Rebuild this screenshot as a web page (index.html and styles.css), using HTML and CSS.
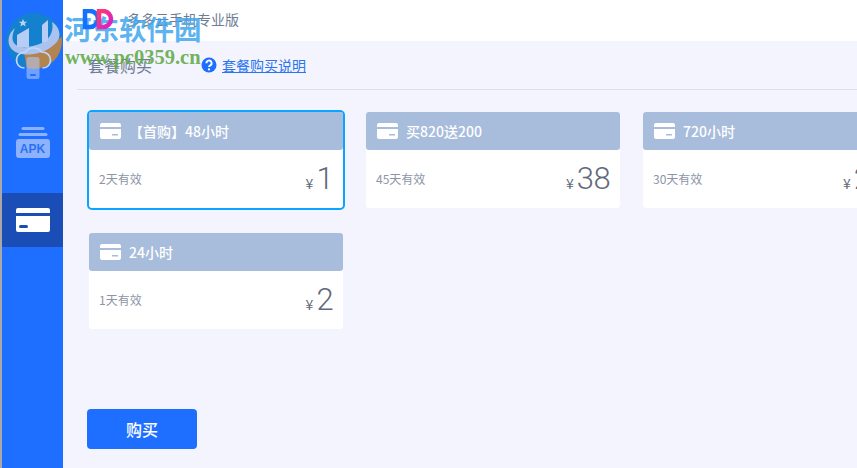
FILE: index.html
```html
<!DOCTYPE html>
<html lang="zh-CN">
<head>
<meta charset="utf-8">
<title>多多云手机专业版</title>
<link rel="stylesheet" href="styles.css">
</head>
<body>
<div class="app">
  <aside class="sidebar">
    <div class="nav-item">
      <svg class="nav-phone" width="40" height="44" viewBox="0 0 40 44">
        <path d="M11.500 29C6 29 3.500 25 3.500 21C3.500 16 7.500 13 12.500 13C14 10.500 17 9 20.500 9C24 9 27 10.500 28.500 13C33.500 13 37.500 16 37.500 21C37.500 25 35 29 29.500 29" fill="none" stroke="#c3d6ff" stroke-width="1.700"/>
        <rect x="13.500" y="18" width="13" height="22" rx="2.500" fill="#b5ccff" fill-opacity=".55"/>
        <rect x="17" y="35" width="6" height="2" rx="1" fill="#1e6eff"/>
      </svg>
    </div>
    <div class="nav-item">
      <svg class="nav-apk" width="36" height="42" viewBox="0 0 36 42">
        <rect x="6.500" y="0" width="23" height="3" rx="1.500" fill="#8db2ff"/>
        <rect x="3.500" y="6" width="29" height="3" rx="1.500" fill="#8db2ff"/>
        <rect x="1" y="12" width="34" height="19" rx="3" fill="#8db2ff"/>
      </svg>
      <span class="apk-label">APK</span>
    </div>
    <div class="nav-item nav-active">
      <svg width="34" height="24" viewBox="0 0 34 24">
        <path d="M2 0h30a2 2 0 0 1 2 2v3H0V2a2 2 0 0 1 2-2zM0 8h34v14a2 2 0 0 1-2 2H2a2 2 0 0 1-2-2z" fill="#fff"/>
        <rect x="3" y="17" width="9" height="3" rx="1.500" fill="#1a4db5"/>
      </svg>
    </div>
  </aside>
  <main class="main">
    <header class="titlebar">
      <svg class="brand" width="32" height="22" viewBox="0 0 32 22">
        <defs>
          <linearGradient id="dd2" x1="0" y1="0" x2="1" y2="1">
            <stop offset="0" stop-color="#ff3b6e"/>
            <stop offset="1" stop-color="#d61fd0"/>
          </linearGradient>
        </defs>
        <path d="M3 2h5a8 8 0 0 1 0 16H3z" fill="none" stroke="#1470ff" stroke-width="4.500"/>
        <path d="M17 2h4a8 8 0 0 1 0 16h-4z" fill="none" stroke="url(#dd2)" stroke-width="4.500"/>
      </svg>
      <span class="app-name">多多云手机专业版</span>
    </header>
    <section class="content">
      <div class="section-head">
        <h1 class="section-title">套餐购买</h1>
        <svg class="help-icon" width="16" height="16" viewBox="0 0 16 16">
          <circle cx="8" cy="8" r="7.500" fill="#1e6eff"/>
          <path d="M5.400 6.200a2.600 2.600 0 1 1 3.900 2.200c-.8.500-1.300.8-1.300 1.700" fill="none" stroke="#fff" stroke-width="1.900"/>
          <circle cx="8" cy="12.400" r="1.100" fill="#fff"/>
        </svg>
        <a class="help-link" href="#">套餐购买说明</a>
      </div>
      <div class="plans">
        <article class="plan plan-selected">
          <div class="plan-head">
            <svg class="card-icon" width="21" height="16" viewBox="0 0 21 16"><path d="M2 0h17a2 2 0 0 1 2 2v2H0V2a2 2 0 0 1 2-2zM0 6h21v8a2 2 0 0 1-2 2H2a2 2 0 0 1-2-2z" fill="#fff"/><rect x="12" y="11" width="6" height="1.500" fill="#a8bcdb"/></svg>
            <span class="plan-name">【首购】48小时</span>
          </div>
          <div class="plan-body"><span class="plan-days">2天有效</span><span class="plan-price"><i class="yen">¥</i><b class="amount">1</b></span></div>
        </article>
        <article class="plan">
          <div class="plan-head">
            <svg class="card-icon" width="21" height="16" viewBox="0 0 21 16"><path d="M2 0h17a2 2 0 0 1 2 2v2H0V2a2 2 0 0 1 2-2zM0 6h21v8a2 2 0 0 1-2 2H2a2 2 0 0 1-2-2z" fill="#fff"/><rect x="12" y="11" width="6" height="1.500" fill="#a8bcdb"/></svg>
            <span class="plan-name">买820送200</span>
          </div>
          <div class="plan-body"><span class="plan-days">45天有效</span><span class="plan-price"><i class="yen">¥</i><b class="amount">38</b></span></div>
        </article>
        <article class="plan">
          <div class="plan-head">
            <svg class="card-icon" width="21" height="16" viewBox="0 0 21 16"><path d="M2 0h17a2 2 0 0 1 2 2v2H0V2a2 2 0 0 1 2-2zM0 6h21v8a2 2 0 0 1-2 2H2a2 2 0 0 1-2-2z" fill="#fff"/><rect x="12" y="11" width="6" height="1.500" fill="#a8bcdb"/></svg>
            <span class="plan-name">720小时</span>
          </div>
          <div class="plan-body"><span class="plan-days">30天有效</span><span class="plan-price"><i class="yen">¥</i><b class="amount">28</b></span></div>
        </article>
        <article class="plan">
          <div class="plan-head">
            <svg class="card-icon" width="21" height="16" viewBox="0 0 21 16"><path d="M2 0h17a2 2 0 0 1 2 2v2H0V2a2 2 0 0 1 2-2zM0 6h21v8a2 2 0 0 1-2 2H2a2 2 0 0 1-2-2z" fill="#fff"/><rect x="12" y="11" width="6" height="1.500" fill="#a8bcdb"/></svg>
            <span class="plan-name">24小时</span>
          </div>
          <div class="plan-body"><span class="plan-days">1天有效</span><span class="plan-price"><i class="yen">¥</i><b class="amount">2</b></span></div>
        </article>
      </div>
      <button class="buy-btn" type="button">购买</button>
    </section>
  </main>
</div>
<div class="watermark">
  <svg class="wm-logo" width="60" height="62" viewBox="0 0 60 62">
    <defs><clipPath id="wmc"><circle cx="30" cy="30" r="28"/></clipPath></defs>
    <circle cx="30" cy="30" r="28" fill="#1481cf"/>
    <g clip-path="url(#wmc)">
      <path d="M60 24V62H24L20 42L50 32z" fill="#b2844f"/>
    </g>
    <path d="M11 17C2 24 2 38 14 42C26 46 42 42 52 32C58 26 56 16 48 11C50 20 46 28 38 32C28 36 18 38 12 34C7 30 8 24 11 17z" fill="#a9c2ef"/>
    <path d="M13 24L25 17V36H13zM38 14L44 9V30L38 32z" fill="#b7cdf5"/>
    <path d="M19 8l1.200 2.800h3l-2.400 1.800 .9 3-2.700-1.800-2.700 1.800 .9-3-2.400-1.800h3z" fill="#bcd3f7"/>
  </svg>
  <span class="wm-title">河东软件园</span>
  <span class="wm-url">www.pc0359.cn</span>
</div>
</body>
</html>
```

FILE: styles.css
```css
* { box-sizing: border-box; }
html, body { margin: 0; height: 100%; }
body {
  position: relative;
  width: 857px;
  height: 468px;
  overflow: hidden;
  font-family: "Noto Sans CJK SC", "Noto Sans", sans-serif;
  background: #f3f4fd;
}
.app { display: flex; height: 468px; }
.sidebar {
  flex: 0 0 63px;
  display: flex;
  flex-direction: column;
  gap: 28px;
  padding-top: 29px;
  background: #1e6eff;
  border-left: 2px solid #a8a8a8;
}
.nav-item {
  position: relative;
  height: 54px;
  display: flex;
  align-items: center;
  justify-content: center;
}
.nav-phone { position: relative; z-index: 2; margin-top: 10px; }
.nav-apk { margin-top: 20px; }
.nav-active { background: #1a4db5; }
.apk-label {
  position: absolute;
  left: 0;
  right: 0;
  top: 31px;
  text-align: center;
  font: 700 12px/14px "Liberation Sans", sans-serif;
  color: #2a72f0;
}
.main { flex: 1; min-width: 0; display: flex; flex-direction: column; }
.titlebar {
  height: 41px;
  display: flex;
  align-items: center;
  padding-left: 19px;
  background: #fff;
}
.brand { position: relative; z-index: 2; margin-top: -2px; }
.app-name { margin: -3px 0 0 13px; font-size: 14px; line-height: 20px; color: #6f7d94; }
.content { flex: 1; padding: 0 0 0 14px; }
.section-head {
  height: 49px;
  display: flex;
  align-items: center;
  padding: 0 0 1px 11px;
  border-bottom: 1px solid #dde0e8;
}
.section-title {
  margin: 0;
  width: 114px;
  font-size: 16px;
  font-weight: 400;
  line-height: 22px;
  color: #6f7d94;
}
.help-icon { flex: none; margin-left: -1px; }
.help-link { margin-left: 5px; font-size: 14px; line-height: 20px; color: #2a74ee; text-decoration: underline; }
.plans {
  display: grid;
  grid-template-columns: repeat(3, 254px);
  grid-auto-rows: 96px;
  column-gap: 23px;
  row-gap: 25px;
  margin: 22px 0 0 12px;
}
.plan { background: #fff; border-radius: 3px; }
.plan-selected { box-shadow: 0 0 0 2px #0aa5ff; }
.plan-head {
  height: 38px;
  display: flex;
  align-items: center;
  padding-left: 11px;
  border-radius: 3px;
  background: #a8bcdb;
}
.card-icon { flex: none; }
.plan-name { margin-left: 8px; font-size: 14px; font-weight: 500; line-height: 20px; color: #fff; }
.plan-body {
  height: 58px;
  display: flex;
  align-items: center;
  justify-content: space-between;
  padding: 0 10px;
}
.plan-days { font-size: 12px; line-height: 18px; color: #8b95a7; }
.plan-price { display: flex; align-items: baseline; color: #5f6a7a; }
.yen { font-style: normal; font-size: 14px; margin-right: 3px; }
.amount {
  font-family: "Roboto", sans-serif;
  font-weight: 300;
  font-size: 31px;
  line-height: 40px;
  letter-spacing: -.6px;
}
.buy-btn {
  display: block;
  width: 110px;
  height: 40px;
  margin: 80px 0 0 10px;
  border: 0;
  border-radius: 4px;
  background: #1e6eff;
  color: #fff;
  font: 500 16px/20px "Noto Sans CJK SC", sans-serif;
}
.watermark { position: absolute; inset: 0; pointer-events: none; }
.wm-logo { position: absolute; left: 4px; top: 11px; }
.wm-title {
  position: absolute;
  left: 64px;
  top: 8px;
  font: 700 27.500px/40px "Noto Sans CJK SC", sans-serif;
  color: rgba(64, 165, 238, .85);
  white-space: nowrap;
}
.wm-url {
  position: absolute;
  left: 65px;
  top: 47px;
  font: 700 20.500px/20px "Liberation Serif", serif;
  color: rgba(96, 170, 70, .9);
  white-space: nowrap;
}
```
